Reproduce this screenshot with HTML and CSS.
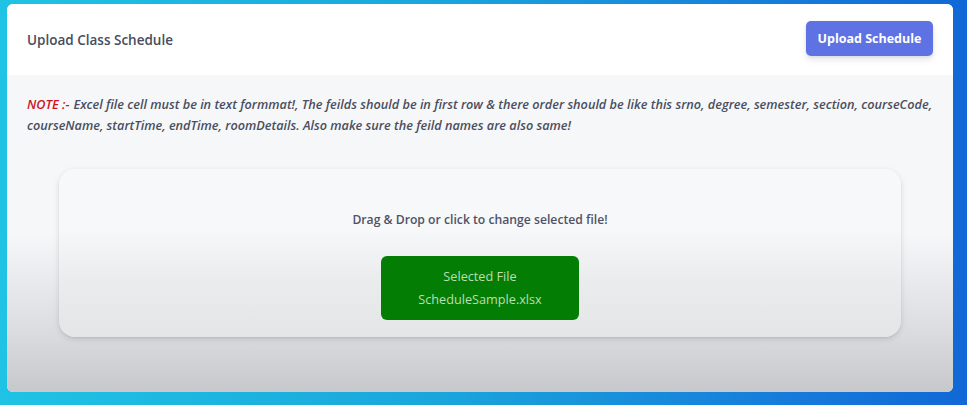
FILE: index.html
```html
<!DOCTYPE html>
<html>
<head>
<meta charset="utf-8">
<link rel="stylesheet" href="styles.css">
</head>
<body>
<div class="page">
  <div class="card">
    <div class="card-header">
      <h3 class="title">Upload Class Schedule</h3>
      <button class="btn-primary">Upload Schedule</button>
    </div>
    <div class="card-body">
      <p class="note"><span class="note-label">NOTE :-</span>Excel file cell must be in text formmat!, The feilds should be in first row &amp; there order should be like this srno, degree, semester, section, courseCode, courseName, startTime, endTime, roomDetails. Also make sure the feild names are also same!</p>
      <div class="dropzone">
        <p class="drop-text">Drag &amp; Drop or click to change selected file!</p>
        <div class="selected">
          <span>Selected File</span>
          <span>ScheduleSample.xlsx</span>
        </div>
      </div>
    </div>
  </div>
</div>
</body>
</html>
```

FILE: styles.css
```css
* { box-sizing: border-box; }
html, body { margin: 0; padding: 0; }
body {
  width: 967px;
  height: 405px;
  overflow: hidden;
  font-family: "Open Sans", "Noto Sans", sans-serif;
  background: linear-gradient(90deg, #1fc3e4 0%, #1aa6dc 45%, #167ddb 80%, #1168d6 100%);
}
.page {
  padding: 4px 14px 13px 7px;
  height: 405px;
}
.card {
  height: 388px;
  border-radius: 6px;
  overflow: hidden;
  display: flex;
  flex-direction: column;
  background: #fff;
}
.card-header {
  height: 71px;
  flex: none;
  background: #fff;
  display: flex;
  align-items: center;
  justify-content: space-between;
  padding: 0 20px 0 20px;
}
.title {
  margin: 0;
  font-size: 13.5px;
  font-weight: 600;
  color: #484c5e;
  padding-top: 1px;
}
.btn-primary {
  border: none;
  background: #5e72e4;
  color: #fff;
  font-family: "Open Sans", "Noto Sans", sans-serif;
  font-weight: 700;
  font-size: 12.5px;
  height: 35px;
  width: 127px;
  border-radius: 5px;
  box-shadow: 0 4px 6px rgba(50,50,93,.11), 0 1px 3px rgba(0,0,0,.08);
  margin-top: -3px;
}
.card-body {
  flex: 1;
  background: linear-gradient(180deg, #f6f7f9 0%, #f6f7f9 50%, #dcdde0 80%, #c7c8cb 100%);
  padding: 19px 6px 0 20px;
}
.note {
  margin: 0;
  font-size: 12.7px;
  line-height: 21px;
  font-style: italic;
  font-weight: 600;
  color: #4a4e5e;
}
.note-label {
  color: #cf1126;
  display: inline-block;
  margin-right: 4px;
}
.dropzone {
  margin: 33px 46px 0 32px;
  height: 168px;
  border-radius: 16px;
  background: linear-gradient(180deg, #f7f8fa 0%, #f7f8fa 35%, #ebecee 65%, #e4e5e7 100%);
  box-shadow: 0 2px 6px rgba(0,0,0,.12), 0 1px 2px rgba(0,0,0,.06);
  display: flex;
  flex-direction: column;
  align-items: center;
  padding-top: 42px;
}
.drop-text {
  margin: 0;
  font-size: 12.2px;
  font-weight: 600;
  color: #4f5366;
}
.selected {
  margin-top: 28px;
  width: 198px;
  height: 64px;
  border-radius: 6px;
  background: #047d04;
  color: #b9dfb3;
  font-size: 12.7px;
  display: flex;
  flex-direction: column;
  align-items: center;
  justify-content: center;
  line-height: 23px;
}
```
